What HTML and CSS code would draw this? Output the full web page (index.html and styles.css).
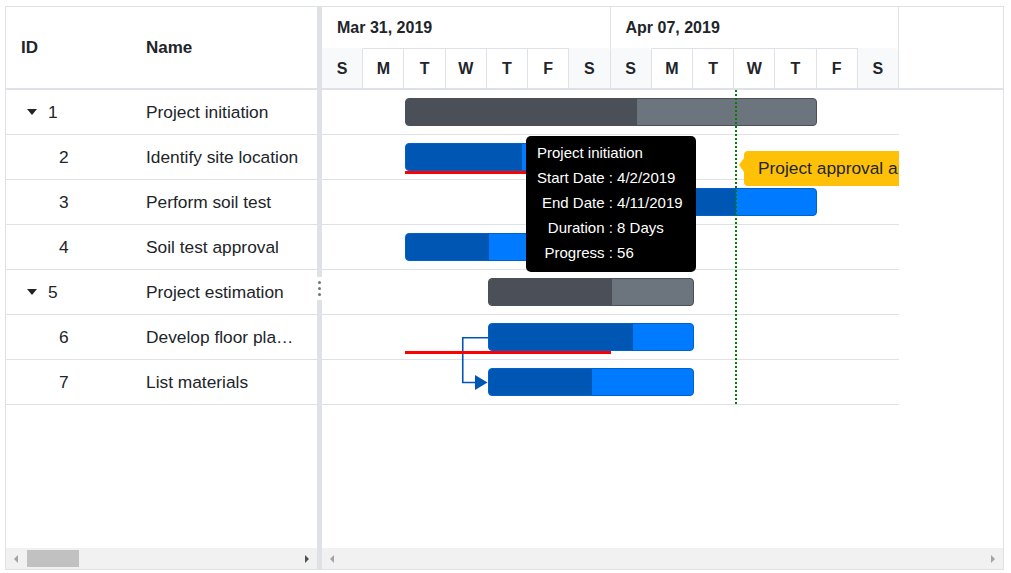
FILE: index.html
```html
<!DOCTYPE html>
<html>
<head>
<meta charset="utf-8">
<title>Gantt</title>
<link rel="stylesheet" href="styles.css">
</head>
<body>
<div class="gantt">
  <div class="grid-pane">
    <div class="grid-header">
      <div class="col-id">ID</div>
      <div class="col-name">Name</div>
    </div>
    <div class="grid-body">
      <div class="grow"><div class="col-id"><span class="caret"></span>1</div><div class="col-name">Project initiation</div></div>
      <div class="grow"><div class="col-id"><span class="indent"></span>2</div><div class="col-name">Identify site location</div></div>
      <div class="grow"><div class="col-id"><span class="indent"></span>3</div><div class="col-name">Perform soil test</div></div>
      <div class="grow"><div class="col-id"><span class="indent"></span>4</div><div class="col-name">Soil test approval</div></div>
      <div class="grow"><div class="col-id"><span class="caret"></span>5</div><div class="col-name">Project estimation</div></div>
      <div class="grow"><div class="col-id"><span class="indent"></span>6</div><div class="col-name">Develop floor plan for estimation</div></div>
      <div class="grow"><div class="col-id"><span class="indent"></span>7</div><div class="col-name">List materials</div></div>
    </div>
    <div class="hscroll grid-scroll">
      <span class="arr-left"></span>
      <span class="thumb"></span>
      <span class="arr-right dark"></span>
    </div>
  </div>

  <div class="splitter">
    <div class="handle"><i></i><i></i><i></i></div>
  </div>

  <div class="chart-pane">
    <div class="timeline">
      <div class="tl-inner">
        <div class="tier-top">
          <div class="week">Mar 31, 2019</div>
          <div class="week">Apr 07, 2019</div>
        </div>
        <div class="tier-bottom">
          <div class="day we">S</div><div class="day">M</div><div class="day">T</div><div class="day">W</div><div class="day">T</div><div class="day">F</div><div class="day we">S</div>
          <div class="day we">S</div><div class="day">M</div><div class="day">T</div><div class="day">W</div><div class="day">T</div><div class="day">F</div><div class="day we">S</div>
        </div>
      </div>
    </div>
    <div class="chart-body">
      <div class="canvas">
        <div class="crow"></div><div class="crow"></div><div class="crow"></div><div class="crow"></div><div class="crow"></div><div class="crow"></div><div class="crow"></div>

        <svg class="connector" width="577" height="315" viewBox="0 0 577 315">
          <path d="M166 247.75 H140.75 V292.5 H154" fill="none" stroke="#0056b3" stroke-width="1.6"/>
          <polygon points="153,285 165.5,292.5 153,300" fill="#0056b3"/>
        </svg>

        <div class="baseline" style="left:83px;top:81px;width:124px"></div>
        <div class="baseline" style="left:83px;top:261px;width:206px"></div>

        <div class="bar parent" style="left:83px;top:8px;width:412px"><div class="prog" style="width:231px"></div></div>
        <div class="bar child" style="left:83px;top:53px;width:165px"><div class="prog" style="width:116px"></div></div>
        <div class="bar child" style="left:206px;top:98px;width:289px"><div class="prog" style="width:207px"></div></div>
        <div class="bar child" style="left:83px;top:143px;width:165px"><div class="prog" style="width:83px"></div></div>
        <div class="bar parent" style="left:165.5px;top:188px;width:206px"><div class="prog" style="width:123px"></div></div>
        <div class="bar child" style="left:165.5px;top:233px;width:206px"><div class="prog" style="width:144px"></div></div>
        <div class="bar child" style="left:165.5px;top:278px;width:206px"><div class="prog" style="width:103px"></div></div>

        <div class="event-line"></div>
        <div class="event-label">Project approval and kick off</div>

        <div class="tooltip">
          <div class="tt-title">Project initiation</div>
          <table class="tt-table">
            <tr><td class="tt-label">Start Date</td><td class="tt-val">&nbsp;:&nbsp;4/2/2019</td></tr>
            <tr><td class="tt-label">End Date</td><td class="tt-val">&nbsp;:&nbsp;4/11/2019</td></tr>
            <tr><td class="tt-label">Duration</td><td class="tt-val">&nbsp;:&nbsp;8 Days</td></tr>
            <tr><td class="tt-label">Progress</td><td class="tt-val">&nbsp;:&nbsp;56</td></tr>
          </table>
        </div>
      </div>
    </div>
    <div class="hscroll chart-scroll">
      <span class="arr-left"></span>
      <span class="arr-right"></span>
    </div>
  </div>
</div>
</body>
</html>
```

FILE: styles.css
```css
* {
  box-sizing: border-box;
  margin: 0;
  padding: 0;
}

body {
  margin: 0;
  background: #fff;
  font-family: "Liberation Sans", Arial, sans-serif;
  color: #212529;
}

.gantt {
  margin: 6px 0 0 5px;
  width: 999px;
  height: 564px;
  border: 1px solid #dee2e6;
  display: flex;
}

/* ---------- grid ---------- */
.grid-pane {
  width: 311px;
  display: flex;
  flex-direction: column;
}

.grid-header {
  height: 83px;
  border-bottom: 2px solid #dee2e6;
  display: flex;
  align-items: center;
  font-weight: bold;
  font-size: 17px;
}

.col-id {
  width: 125px;
  padding-left: 15px;
  display: flex;
  align-items: center;
  flex: none;
}

.col-name {
  flex: 1;
  min-width: 0;
  padding: 0 15px;
  white-space: nowrap;
  overflow: hidden;
  text-overflow: ellipsis;
}

.grid-body {
  flex: 1;
}

.grow {
  height: 45px;
  border-bottom: 1px solid #dee2e6;
  display: flex;
  align-items: center;
  font-size: 17.33px;
}

.caret {
  width: 0;
  height: 0;
  margin-left: 6px;
  margin-right: 11px;
  border-left: 5px solid transparent;
  border-right: 5px solid transparent;
  border-top: 6px solid #212529;
}

.indent {
  width: 38px;
  flex: none;
}

/* ---------- scrollbars ---------- */
.hscroll {
  height: 21px;
  background: #f1f1f1;
  display: flex;
  align-items: center;
  padding: 0 8px;
  flex: none;
}

.arr-left {
  width: 0;
  height: 0;
  border-top: 4px solid transparent;
  border-bottom: 4px solid transparent;
  border-right: 4px solid #a3a3a3;
}

.arr-right {
  width: 0;
  height: 0;
  margin-left: auto;
  border-top: 4px solid transparent;
  border-bottom: 4px solid transparent;
  border-left: 4px solid #a3a3a3;
}

.arr-right.dark {
  border-left-color: #505050;
}

.thumb {
  width: 52px;
  height: 17px;
  margin-left: 9px;
  background: #c1c1c1;
}

/* ---------- splitter ---------- */
.splitter {
  width: 5px;
  background: #dee2e6;
  position: relative;
  flex: none;
}

.handle {
  position: absolute;
  left: 0;
  top: 270px;
  width: 5px;
  height: 23px;
  background: #fff;
  display: flex;
  flex-direction: column;
  align-items: center;
  justify-content: center;
  gap: 3px;
}

.handle i {
  display: block;
  width: 3px;
  height: 3px;
  border-radius: 50%;
  background: #6c757d;
}

/* ---------- chart ---------- */
.chart-pane {
  flex: 1;
  min-width: 0;
  display: flex;
  flex-direction: column;
}

.timeline {
  height: 83px;
  border-bottom: 2px solid #dee2e6;
  flex: none;
}

.tl-inner {
  width: 577px;
}

.tier-top {
  display: grid;
  grid-template-columns: 1fr 1fr;
  height: 41px;
}

.week {
  border-right: 1px solid #dee2e6;
  padding-left: 15px;
  font-weight: bold;
  font-size: 16px;
  line-height: 41px;
}

.tier-bottom {
  display: grid;
  grid-template-columns: repeat(14, 1fr);
  height: 40px;
}

.day {
  border-right: 1px solid #dee2e6;
  border-top: 1px solid #dee2e6;
  display: flex;
  align-items: center;
  justify-content: center;
  font-weight: bold;
  font-size: 16px;
}

.day.we {
  background: #f8f9fa;
  border-top-color: #f8f9fa;
}

.chart-body {
  flex: 1;
}

.canvas {
  position: relative;
  width: 577px;
  height: 315px;
  overflow: hidden;
}

.crow {
  height: 45px;
  border-bottom: 1px solid #dee2e6;
}

.connector {
  position: absolute;
  left: 0;
  top: 0;
}

.baseline {
  position: absolute;
  height: 3px;
  background: #ff0000;
}

.bar {
  position: absolute;
  height: 28px;
  border-radius: 4px;
  overflow: hidden;
}

.bar .prog {
  height: 100%;
}

.bar.parent {
  background: #6c757d;
  border: 1px solid #495057;
}

.bar.parent .prog {
  background: #4b5058;
}

.bar.child {
  background: #007bff;
  border: 1px solid #0062cc;
}

.bar.child .prog {
  background: #0056b3;
}

.event-line {
  position: absolute;
  left: 413px;
  top: 0;
  width: 2px;
  height: 315px;
  background: repeating-linear-gradient(to bottom, #008000 0 2px, transparent 2px 4px);
}

.event-label {
  position: absolute;
  left: 422px;
  top: 61px;
  height: 35px;
  line-height: 35px;
  padding: 0 14px;
  background: #ffc107;
  border-radius: 4px;
  font-size: 17.33px;
  white-space: nowrap;
  color: #212529;
}

.event-label::before {
  content: "";
  position: absolute;
  left: -5px;
  top: 7px;
  border-top: 7px solid transparent;
  border-bottom: 7px solid transparent;
  border-right: 5px solid #ffc107;
}

.tooltip {
  position: absolute;
  left: 204px;
  top: 46px;
  width: 170px;
  height: 136px;
  padding: 4px 11px 7px;
  background: #000;
  border-radius: 5px;
  color: #fff;
  font-size: 15px;
}

.tt-title {
  line-height: 25px;
  white-space: nowrap;
}

.tt-table {
  border-collapse: collapse;
  border-spacing: 0;
}

.tt-table td {
  line-height: 25px;
  padding: 0;
  white-space: nowrap;
}

.tt-label {
  text-align: right;
}
```
